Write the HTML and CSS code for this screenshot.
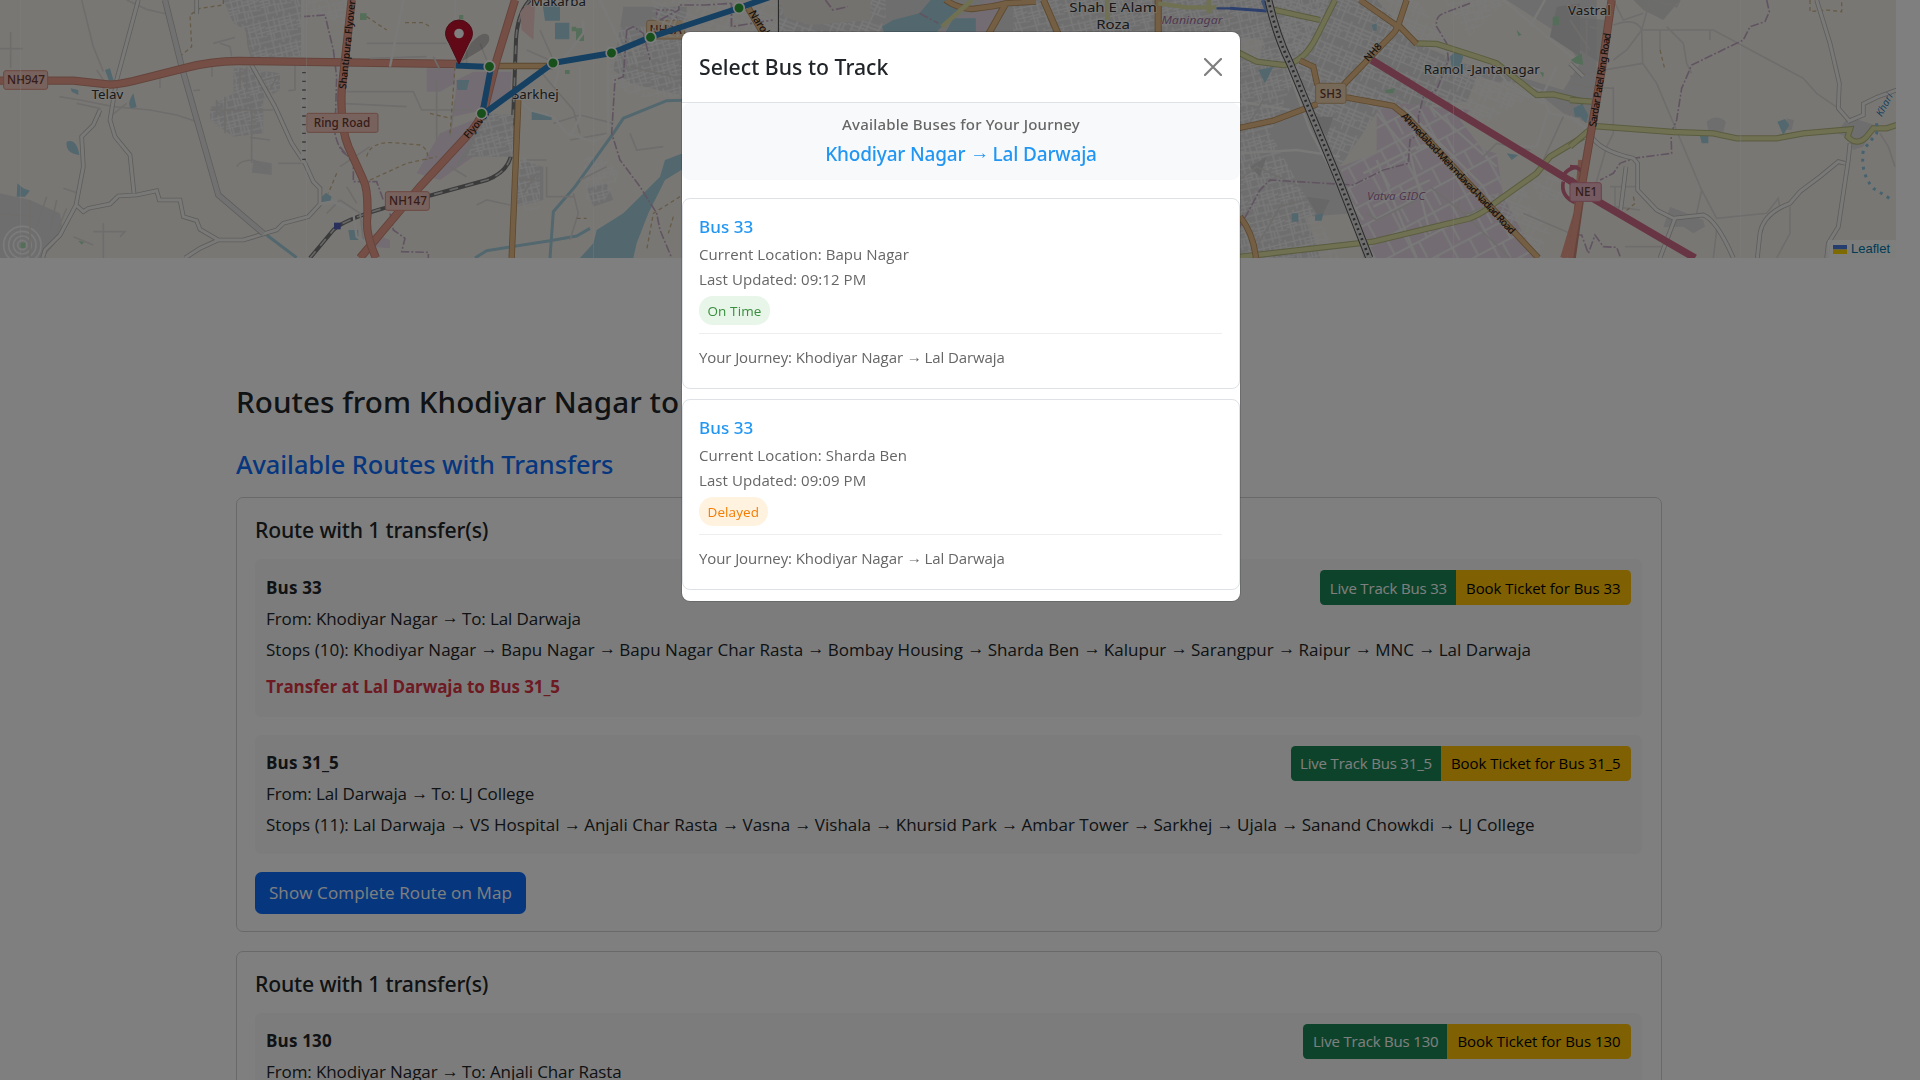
FILE: index.html
```html
<!DOCTYPE html>
<html lang="en">
<head>
<meta charset="utf-8">
<title>Bus Routes</title>
<link rel="stylesheet" href="styles.css">
</head>
<body>
<section class="map">
<svg class="map-canvas" viewBox="0 0 1896 258" width="1896" height="258">
  <defs>
    <pattern id="streets" width="94" height="82" patternUnits="userSpaceOnUse" patternTransform="rotate(-14)">
      <path d="M0 10H94M0 30H60L94 24M0 48H40L94 54M0 70H94M12 0V82M30 0V48M44 10V82M62 0V30L66 82M80 0V54M0 40H30M44 20H80M20 48V70M54 50V70M66 40H94" class="st"/>
    </pattern>
    <pattern id="streets2" width="70" height="78" patternUnits="userSpaceOnUse" patternTransform="rotate(22)">
      <path d="M0 12H70M0 34H46L70 38M0 58H70M14 0V58M34 12V78M52 0V78M0 24H14M34 24H70M14 46H52M62 38V58" class="st"/>
    </pattern>
    <pattern id="plots" width="110" height="120" patternUnits="userSpaceOnUse" patternTransform="rotate(-28)">
      <path d="M0 10H110M0 66H110M20 0V120M78 10V66M50 66V120" class="st wide"/>
    </pattern>
  </defs>
  <rect width="1896" height="258" class="land"/>

  <!-- west: Telav -->
  <g transform="scale(.33333)">
    <path class="urban" d="M670 0H905V170L760 180L735 90L700 70ZM700 200L840 220V270L790 300V400L700 410L630 360V320L700 280ZM760 480L815 490V525L755 518ZM0 580L90 600L180 640L190 700L130 774H0Z"/>
    <path fill="url(#streets)" d="M670 0H905V170L760 180L735 90L700 70ZM700 200L840 220V270L790 300V400L700 410L630 360V320L700 280ZM920 0H1050V80L930 40Z"/>
    <g class="ring"><circle cx="67" cy="735" r="14"/><circle cx="67" cy="735" r="27"/><circle cx="67" cy="735" r="41"/><circle cx="67" cy="735" r="56"/></g>
    <path class="minor" d="M245 0L280 140L310 215M380 0L440 28L500 42M32 95V205M0 146H68M178 290L240 300L340 320L450 330L530 345L590 365M740 90L745 140L760 190M660 130L690 140L695 170M640 130L705 112M480 230V265M636 190V230M885 195V270L865 272M630 330H820M755 330V490M710 500Q720 480 760 480L800 510M810 420L750 412M835 490H920M190 565L235 580M110 680L140 590M150 690L170 600M170 695L200 625M0 640L100 650M90 600V774M220 710L280 735M310 670V774M280 695H375L360 710M600 270L580 272"/>
    <path class="minor" d="M230 310L300 325V350M290 210L310 240V290M330 350L380 310M675 290V400M650 300V350M720 210V270M740 200V270M790 240L830 230L810 270M980 640L1020 600"/>
    <path class="water" d="M315 210L330 205L342 245H328ZM212 265L235 270V285L215 275ZM400 280Q380 310 392 325L410 322ZM200 425Q230 415 238 465Q195 460 200 425ZM52 550L70 565L90 572L75 590H50ZM962 595L978 578L995 590L990 608H968Z"/>
    <path class="canal" d="M800 705L890 773"/>
    <path class="green" d="M60 728h16v16H60ZM235 722l18 4-8 8ZM1080 40h20v20h-20Z"/>
    <path class="boundary" d="M905 50L975 45L1000 150L1010 230L1005 400Q1015 450 1040 465"/>
    <path class="track" d="M670 0V15L600 25L570 45L575 140L545 165M1010 520L985 580"/>
    <g class="road-c"><path d="M415 0L350 240L330 360L345 410L390 465L402 580M300 330L280 375L245 410L250 500L228 615L180 705L135 750L128 774M228 615L250 635L265 625L330 612L355 588L410 585L470 572L478 600H540L550 650L590 662L600 688L655 720H730L830 690L850 670L925 650L960 612V565L940 545L915 490L875 430L825 320L755 195M655 720L600 745L555 774M590 0V42"/></g>
    <g class="road"><path d="M415 0L350 240L330 360L345 410L390 465L402 580M300 330L280 375L245 410L250 500L228 615L180 705L135 750L128 774M228 615L250 635L265 625L330 612L355 588L410 585L470 572L478 600H540L550 650L590 662L600 688L655 720H730L830 690L850 670L925 650L960 612V565L940 545L915 490L875 430L825 320L755 195M655 720L600 745L555 774M590 0V42M908 0V490M960 612L1000 605L1050 630"/></g>
    <path class="road-c w" d="M495 0L545 200L655 585L790 700"/><path class="road w" d="M495 0L545 200L655 585L790 700"/>
    <path class="dash" d="M912 190V480"/>
    <path class="trunk-c" d="M0 242H220L330 254Q350 254 400 243L560 203Q640 182 720 183L1380 192"/>
    <path class="trunk" d="M0 242H220L330 254Q350 254 400 243L560 203Q640 182 720 183L1380 192"/>
    <path class="rail" d="M930 774L1000 690Q1030 660 1150 625L1460 540Q1530 515 1536 450L1548 120Q1552 40 1590 0"/>
    <path class="rail-d" d="M930 774L1000 690Q1030 660 1150 625L1460 540Q1530 515 1536 450L1548 120Q1552 40 1590 0"/>
    <rect x="1002" y="668" width="20" height="20" fill="#5560b8"/>
    <text x="322" y="297" class="place">Telav</text>
  </g>

  <!-- Sarkhej -->
  <g transform="translate(340 0) scale(.33333)">
    <path class="industry" d="M260 205H345L345 250L300 275H260ZM400 215H515L510 290L430 330L340 350L350 240ZM300 400L400 360V470L300 540L230 520ZM100 700L150 720V745L90 740Z"/>
    <path class="urban" d="M440 340L520 345V470L380 470L340 510ZM850 20H1040V290L870 250L820 210ZM540 480L610 500V600L530 620ZM740 560L800 550L820 600L760 620Z"/>
    <path fill="url(#streets)" d="M440 340L520 345V470L380 470ZM840 80H1040V290L880 290L800 240ZM530 460L600 500V630H530ZM730 470L790 470L840 520L790 610L740 600Z"/>
    <path class="pink" d="M540 40Q560 0 585 20L580 120L545 90Z"/>
    <path class="water" d="M608 15H660V62H615ZM645 68H688V118H645ZM350 240H388L380 270H352ZM575 335L635 345V360H575ZM25 690L55 690V720H30Z"/>
    <path class="water" d="M1040 455L975 480L960 530L900 590L850 640L770 690L760 730L720 774H880L890 730L925 640L950 590L975 540L1040 500Z"/>
    <path class="canal" d="M1050 300L980 302L850 355L820 400L705 560L640 635L630 774M405 774L440 752L630 722L710 708L750 685"/>
    <path class="green" d="M357 45h13v13h-13ZM695 80h14v14h-14ZM708 85h24v38h-24ZM675 210h14v12h-14Z"/>
    <path class="minor" d="M80 130H320M90 175L260 170M20 275H220L245 330H400M290 240V420M330 410L345 300M420 130L440 180M0 310L200 320M380 150V190M300 210L280 170M590 200L640 260L700 330L720 400M560 150L650 190M600 90L640 180M690 420L800 400M640 370L720 345L820 370M560 480H620M620 500V590H700M700 580L715 640L690 720M870 400L890 450L970 440M410 615L440 600L510 615M720 540L800 500M870 200L1040 240M830 140L860 200M540 540H600M550 580L590 520M330 500L380 530M0 600L60 640L70 720M20 560L50 610M0 500L90 440"/>
    <path class="road thin" d="M190 0L150 200M345 0V60M730 60V100L660 190L645 260M720 200V350L690 410M540 300L570 330L640 350L680 400L760 425L800 405M805 140V400M850 150L780 0M870 120L890 190M40 640L50 710L75 725"/>
    <path class="boundary" d="M860 90L850 230L825 240L815 400L840 480L900 560L950 640L960 690L995 774M0 440L40 490V545H110L130 600M150 640L160 690L195 715L185 755L265 757V774M950 90V30H1000L1020 80M860 90L880 80L910 100L930 180"/>
    <path class="track" d="M80 50L140 90M195 68H250L270 80M90 540L200 490L290 470M80 470Q90 425 160 428L240 435Q270 450 260 480M345 200L330 400M1020 590L940 640L920 750M1000 650L985 700M270 340L330 355M710 655H740"/>
    <path class="primary-c" d="M470 198H640M535 300L515 774"/><path class="primary" d="M470 198H640M535 300L515 774"/>
    <path class="trunk-c" d="M525 0L470 180L435 320Q420 370 370 420L240 560L60 774"/><path class="trunk" d="M525 0L470 180L435 320Q420 370 370 420L240 560L60 774"/>
    <path class="trunk-c" d="M35 0L5 270Q0 380 25 440L70 540Q85 570 82 650Q75 700 108 774"/><path class="trunk" d="M35 0L5 270Q0 380 25 440L70 540Q85 570 82 650Q75 700 108 774"/>
    <rect x="-100" y="340" width="214" height="57" rx="5" class="shield"/><text x="6" y="381" class="ref">Ring Road</text>
    <rect x="136" y="575" width="132" height="56" rx="7" class="shield"/><text x="204" y="614" class="ref">NH147</text>
    <rect x="920" y="61" width="114" height="56" rx="7" class="shield tan"/><text x="977" y="101" class="ref">NH8A</text>
    <text transform="translate(18 268) rotate(-84)" class="street start">Shantipura Flyover</text>
    <text transform="translate(385 418) rotate(-50)" class="street start">Flyover</text>
    <text x="655" y="18" class="place">Makarba</text>
    <text x="586" y="296" class="place">Sarkhej</text>
  </g>
  <g transform="scale(.33333)"><rect x="11" y="212" width="132" height="56" rx="7" class="shield"/><text x="78" y="253" class="ref">NH947</text></g>

  <!-- strip along the top edge -->
  <g transform="translate(660 0) scale(.376 .33333)">
    <rect x="315" y="0" width="1300" height="110" class="urban"/>
    <rect x="-20" y="0" width="620" height="110" fill="url(#streets2)"/>
    <rect x="940" y="0" width="650" height="110" fill="url(#streets)"/>
    <path class="urban soft" d="M320 0H560V60L400 75L330 50Z"/>
    <path class="industry" d="M830 40L900 20L870 110H740L790 50ZM860 0H930L910 30H850Z"/>
    <path class="water" d="M590 80L620 60L690 40L720 0H770L800 30L740 90L730 110H600ZM780 55H840V95H760Z"/>
    <path class="boundary" d="M0 60L50 30V15H120L190 10M190 10V80L300 60M440 0L460 30L500 20M690 40L740 70"/>
    <path class="primary-c" d="M760 0Q790 25 830 27Q890 20 920 10L1000 5M920 10L870 110M1020 0L1062 110M1325 0V110M235 25L280 110"/><path class="primary" d="M760 0Q790 25 830 27Q890 20 920 10L1000 5M920 10L870 110M1020 0L1062 110M1325 0V110M235 25L280 110"/>
    <path class="sec" d="M830 0L750 80M1325 10L1400 22H1480M1460 0V40M1190 0V60"/>
    <path d="M1480 25H1600" stroke="#5a7fd8" stroke-width="7"/>
    <path d="M315 0V110" stroke="#555" stroke-width="3"/>
    <text x="1205" y="35" class="place">Shah E Alam</text><text x="1205" y="86" class="place">Roza</text>
    <text x="1415" y="73" class="suburb">Maninagar</text>
    <text transform="translate(235 38) rotate(60)" class="street start">Narol-S</text>
  </g>

  <!-- Vatva -->
  <g transform="translate(1230 0) scale(.33333)">
    <path class="urban" d="M0 0H1100V380L1000 340L900 260L820 240L760 300L560 320L440 340L330 500L430 774H0Z"/>
    <path class="land" d="M440 0L600 0L830 0L1000 110L1050 190L1000 270L900 240L700 190L560 130ZM740 230L900 270L950 300L880 460L740 400L690 360ZM770 400L900 450L860 540L800 540ZM940 600L1050 620V774H900ZM230 650L370 640L400 774H270ZM0 110L100 120L90 180L30 150Z"/>
    <path fill="url(#streets)" d="M0 0H300L120 400L330 774H0ZM640 0H830L720 110Z"/>
    <path fill="url(#streets2)" d="M130 0H560L700 190L940 270L740 380L440 340L330 500L180 180Z"/>
    <path class="industry" d="M330 500L440 460V330L520 310L600 320L720 330L690 360L760 450L800 460L820 590L920 774H430Z"/>
    <path fill="url(#plots)" d="M330 500L440 460V330L520 310L600 320L720 330L690 360L760 450L800 460L820 590L920 774H430Z"/>
    <path fill="url(#streets2)" d="M760 590L880 560L960 700L920 774ZM900 530L1000 530V600L930 600Z"/>
    <path class="dark" d="M980 20L1050 10V170L960 110ZM250 350h60l-20 60ZM60 500l50-30-20 60ZM230 590l70 10-30 60Z"/>
    <path class="water" d="M85 210L130 200L105 250ZM660 170l20-20 20 20-10 30h-25ZM185 640l20 0v25h-20ZM255 645l25-5-5 22h-20ZM425 75l15-5v22h-10ZM830 460l35 5-20 15ZM1030 325L1060 310V350H1035Z"/>
    <path class="green" d="M465 270L495 265L490 280H468ZM860 90L875 105L865 108ZM968 50h20v25h-20ZM930 215l12 3-3 15Z"/>
    <path class="road thin" d="M820 0L950 110L1050 190M900 80L945 0M940 300L960 340L1050 360M980 200L935 290L955 330L920 440L870 440M700 225Q800 180 830 250L940 310M440 340L540 460L600 700M520 320L760 560M600 320L800 500M400 520L560 440M430 620L600 540M440 480L560 774M160 170L240 390L330 560L400 660M0 300L180 330M30 460L200 450L330 470M560 450Q570 430 600 440L840 680"/>
    <path class="minor" d="M600 560L700 640L840 774M690 600Q670 640 720 640L760 620M1000 350L940 480M0 560L80 500L210 560M60 774L150 620L220 600M100 300L40 400M880 640L1020 700M760 470L800 430L900 450M410 640L440 660L560 600"/>
    <path class="boundary" d="M720 10L640 40Q615 50 620 80L650 130L655 180L620 270L580 290L565 350L570 400L540 420L535 490L460 510L370 555L120 540L90 570L30 680"/>
    <path class="sec-c" d="M0 145L80 185L160 195Q220 190 260 110L315 0M110 25L270 60M560 130L620 132L740 170L800 190L920 285L970 283L1060 305M0 774L430 725L720 655Q760 640 800 605L920 520L960 470L1060 410"/>
    <path class="sec" d="M0 145L80 185L160 195Q220 190 260 110L315 0M110 25L270 60M560 130L620 132L740 170L800 190L920 285L970 283L1060 305M0 774L430 725L720 655Q760 640 800 605L920 520L960 470L1060 410"/>
    <path class="primary-c" d="M0 390L130 362L262 312M210 182L250 200L262 255M340 255L490 100Q510 80 490 70L390 0M530 0L505 75L560 132M348 292L490 318L530 350L925 774M30 650Q70 700 78 774"/>
    <path class="primary" d="M0 390L130 362L262 312M210 182L250 200L262 255M340 255L490 100Q510 80 490 70L390 0M530 0L505 75L560 132M348 292L490 318L530 350L925 774M30 650Q70 700 78 774"/>
    <path d="M0 25L110 33" stroke="#5a7fd8" stroke-width="9"/>
    <path d="M98 0L110 30" stroke="#7fa6e0" stroke-width="12"/>
    <path d="M115 0Q140 110 180 190L330 550L418 774" stroke="#555" stroke-width="24"/>
    <path d="M115 0Q140 110 180 190L330 550L418 774" stroke="#ddd" stroke-width="18"/>
    <path d="M115 0Q140 110 180 190L330 550L418 774" stroke="#555" stroke-width="8" stroke-dasharray="6 10"/>
    <path class="motor" d="M425 180L580 275L1000 530L1050 560"/>
    <path class="motor ramp" d="M1000 530Q1010 500 1060 500M1000 545Q990 590 1040 610"/>
    <path class="trunk" d="M1054 480L1040 640L1000 774"/>
    <rect x="257" y="250" width="91" height="60" rx="7" class="shield tan"/><text x="302" y="293" class="ref">SH3</text>
    <text x="755" y="222" class="place">Ramol -Jantanagar</text>
    <text x="498" y="600" class="suburb big">Vatva GIDC</text>
    <text transform="translate(512 350) rotate(47)" class="street start" textLength="485">Ahmedabad-Mehmdavad-Nadiad Road</text>
    <text transform="translate(415 187) rotate(-48)" class="street start">NH8</text>
  </g>

  <!-- east: Vastral ring road -->
  <g transform="translate(1570 0) scale(.33333)">
    <path class="dark" d="M0 50L105 60L90 190L0 130ZM190 0H330L280 60L220 30Z" opacity=".7"/>
    <path class="urban" d="M410 365Q440 340 468 365L460 395H415ZM650 355L672 360L665 390H650ZM835 350L915 375L880 440L850 450L830 410L800 400ZM300 620L400 660L405 680L370 700L340 680L280 682Z"/>
    <path class="water" d="M12 330L40 318L55 345L48 370ZM622 365L645 357L658 375L640 405ZM390 408H415V430H395Z"/>
    <path class="green" d="M2 180L35 160L40 195L15 190Z"/>
    <path class="minor" d="M215 90H430L700 235L740 280L805 325M240 0L215 90L218 190L260 250L395 570L380 640M218 190L130 205L0 230M290 80L340 130L350 190L365 220M130 75Q200 50 215 90L170 150L130 180M130 260V400M395 570L440 655L590 640L625 595L630 625M660 620V700L620 774M930 400L955 440L975 500M0 250L50 260L130 265M75 560L110 440L130 400M120 560H210M165 740H280M440 690L430 774M420 90V120M270 90V150M0 60L60 150M50 60V200M135 560V620L210 630M130 0L160 60L220 40M250 0L320 20L330 0M60 80L100 90"/>
    <path class="boundary" d="M590 0L598 35L585 65L540 80L520 120L365 195L335 265L320 360L303 400L305 460L190 475L150 490L130 520L90 540M18 705H35L55 760L75 705L100 740L140 742L152 774"/>
    <path class="track" d="M270 150L285 210M720 0V35L770 30L815 35V0M190 590L195 610L160 640"/>
    <path class="road-c" d="M740 0L780 130L808 250L805 325L840 365M833 365L880 345V312L920 292L980 270M0 190L40 230M60 400Q80 450 190 475L203 490V570L260 630L310 655L400 645Q440 660 490 774M315 655L270 774M840 430L835 480L805 680L775 730L770 774M825 490L805 485L750 530L690 575L660 610Q580 640 570 700L562 774M168 500L152 630"/>
    <path class="road" d="M740 0L780 130L808 250L805 325L840 365M833 365L880 345V312L920 292L980 270M0 190L40 230M60 400Q80 450 190 475L203 490V570L260 630L310 655L400 645Q440 660 490 774M315 655L270 774M840 430L835 480L805 680L775 730L770 774M825 490L805 485L750 530L690 575L660 610Q580 640 570 700L562 774M168 500L152 630M0 350L60 395"/>
    <path class="sec-c" d="M0 300L65 305M0 440L70 380M70 378L310 396L430 400L500 415H620L700 400L840 388L833 410Q860 440 890 410L910 385H950L980 375"/>
    <path class="sec" d="M0 300L65 305M0 440L70 380M70 378L310 396L430 400L500 415H620L700 400L840 388L833 410Q860 440 890 410L910 385H950L980 375"/>
    <path class="dots" d="M920 370V400L880 450Q870 520 910 565L970 602"/>
    <path class="motor" d="M0 540L60 590L290 725L375 774"/><path class="motor ramp" d="M0 500Q30 500 38 520"/>
    <path class="trunk-c" d="M125 0L95 210L35 560L5 774"/><path class="trunk" d="M125 0L95 210L35 560L0 774"/>
    <rect x="0" y="548" width="94" height="56" rx="7" class="shield rose"/><text x="48" y="589" class="ref">NE1</text>
    <text x="58" y="45" class="place">Vastral</text>
    <text transform="translate(78 382) rotate(-81)" class="street start" textLength="285">Sardar Patel Ring Road</text>
    <text transform="translate(935 352) rotate(-62)" class="river">Khari</text>
  </g>
  <path d="M20.500 0V258M306.500 0V258M593.500 0V258M1453.500 0V258M1740.500 0V258" stroke="#fff" stroke-opacity=".35"/>

  <!-- tracked route -->
  <path class="route" d="M456 65.500L491 67L482 115L553 63L612 53L651 37L739 8L770-3"/>
  <g class="stop"><circle cx="489.500" cy="66.500" r="5.300"/><circle cx="481.500" cy="113.500" r="5.300"/><circle cx="553" cy="63" r="5.300"/><circle cx="611.500" cy="53" r="5.300"/><circle cx="650.500" cy="37.300" r="5.300"/><circle cx="739" cy="8" r="5.300"/></g>
  <path d="M461 62L471 43Q484 29 489 36Q491 43 481 50Z" class="pin-shadow"/>
  <path d="M459 64L449 43Q445.500 38 445.500 33.500A13.500 13.500 0 0 1 472.500 33.500Q472.500 38 469 43Z" class="pin"/>
  <circle cx="459" cy="33.500" r="4.800" fill="#fff"/>
</svg>
<div class="attribution">
  <svg width="14" height="9" viewBox="0 0 14 9"><path fill="#4c7be1" d="M0 0h14v4.500H0z"/><path fill="#ffd500" d="M0 4.500h14V9H0z"/></svg>
  <span>Leaflet</span>
</div>
</section>

<main class="container">
  <h2 class="page-title">Routes from Khodiyar Nagar to</h2>
  <h3 class="section-title">Available Routes with Transfers</h3>

  <article class="card">
    <h4 class="card-title">Route with 1 transfer(s)</h4>
    <section class="leg">
      <div class="leg-head"><strong>Bus 33</strong>
        <div class="actions"><button class="track-btn">Live Track Bus 33</button><button class="book-btn">Book Ticket for Bus 33</button></div></div>
      <p class="from">From: Khodiyar Nagar <i>→</i> To: Lal Darwaja</p>
      <p class="stops">Stops (10): Khodiyar Nagar <i>→</i> Bapu Nagar <i>→</i> Bapu Nagar Char Rasta <i>→</i> Bombay Housing <i>→</i> Sharda Ben <i>→</i> Kalupur <i>→</i> Sarangpur <i>→</i> Raipur <i>→</i> MNC <i>→</i> Lal Darwaja</p>
      <p class="transfer">Transfer at Lal Darwaja to Bus 31_5</p>
    </section>
    <section class="leg">
      <div class="leg-head"><strong>Bus 31_5</strong>
        <div class="actions"><button class="track-btn">Live Track Bus 31_5</button><button class="book-btn">Book Ticket for Bus 31_5</button></div></div>
      <p class="from">From: Lal Darwaja <i>→</i> To: LJ College</p>
      <p class="stops">Stops (11): Lal Darwaja <i>→</i> VS Hospital <i>→</i> Anjali Char Rasta <i>→</i> Vasna <i>→</i> Vishala <i>→</i> Khursid Park <i>→</i> Ambar Tower <i>→</i> Sarkhej <i>→</i> Ujala <i>→</i> Sanand Chowkdi <i>→</i> LJ College</p>
    </section>
    <button class="show-btn">Show Complete Route on Map</button>
  </article>

  <article class="card">
    <h4 class="card-title">Route with 1 transfer(s)</h4>
    <section class="leg">
      <div class="leg-head"><strong>Bus 130</strong>
        <div class="actions"><button class="track-btn">Live Track Bus 130</button><button class="book-btn">Book Ticket for Bus 130</button></div></div>
      <p class="from">From: Khodiyar Nagar <i>→</i> To: Anjali Char Rasta</p>
    </section>
  </article>
</main>

<div class="backdrop">
  <div class="modal">
    <header class="modal-head">
      <h5>Select Bus to Track</h5>
      <svg width="18" height="18" viewBox="0 0 18 18"><path d="M1 1L17 17M17 1L1 17" stroke="#7f7f7f" stroke-width="2.200" stroke-linecap="round"/></svg>
    </header>
    <div class="journey">
      <p class="journey-label">Available Buses for Your Journey</p>
      <p class="journey-route">Khodiyar Nagar <i>→</i> Lal Darwaja</p>
    </div>
    <div class="bus">
      <h6>Bus 33</h6>
      <p>Current Location: Bapu Nagar</p>
      <p>Last Updated: 09:12 PM</p>
      <span class="badge on-time">On Time</span>
      <p class="trip">Your Journey: Khodiyar Nagar <i>→</i> Lal Darwaja</p>
    </div>
    <div class="bus">
      <h6>Bus 33</h6>
      <p>Current Location: Sharda Ben</p>
      <p>Last Updated: 09:09 PM</p>
      <span class="badge delayed">Delayed</span>
      <p class="trip">Your Journey: Khodiyar Nagar <i>→</i> Lal Darwaja</p>
    </div>
  </div>
</div>
</body>
</html>
```
FILE: styles.css
```css
* { box-sizing: border-box; margin: 0; padding: 0; }
html { height: 1080px; overflow: hidden; }
body {
  height: 1080px;
  overflow: hidden;
  background: #fff;
  color: #212529;
  font: 400 17px/26px "Open Sans", "Noto Sans", sans-serif;
}
h2, h3, h4, h5, h6 { font-family: "Noto Sans", "Open Sans", sans-serif; font-weight: 500; }
button { font: inherit; border: 0; }
i {
  display: inline-block;
  width: .93em;
  font: 1em/1 "Liberation Sans", sans-serif;
  text-align: center;
  vertical-align: .07em;
  letter-spacing: 0;
}

/* map */
.map { position: relative; width: 1896px; height: 258px; overflow: hidden; }
.map-canvas { display: block; }
.map-canvas path { fill: none; }
.map-canvas path[fill] { fill: revert-layer; }
.map-canvas .land { fill: #f2efe9; }
.map-canvas .urban { fill: #dedddd; }
.map-canvas .urban.soft { fill: #e9e4de; }
.map-canvas .dark { fill: #cfcfcf; }
.map-canvas .industry { fill: #e6d9e4; }
.map-canvas .pink { fill: #f0cfca; }
.map-canvas .water { fill: #a5cfdc; }
.map-canvas .green { fill: #a9dcb4; }
.map-canvas .pin { fill: #c2132f; stroke: #98182a; }
.map-canvas .pin-shadow { fill: rgba(0, 0, 0, .2); }
.canal { stroke: #a5cfdc; stroke-width: 9; }
.dots { stroke: #8cc4dc; stroke-width: 9; stroke-dasharray: 9 15; }
.st { stroke: #f3f3f3; stroke-width: 4; }
.st.wide { stroke-width: 6; }
.ring { fill: none; stroke: #f6f6f6; stroke-width: 5; }
.minor { stroke: #dcdad8; stroke-width: 5; }
.road-c { stroke: #bdbbb8; stroke-width: 14; fill: none; }
.road { stroke: #f3f2f1; stroke-width: 9; fill: none; }
.road-c.w { stroke-width: 19; }
.road.w { stroke-width: 14; stroke: #e3e3e3; }
.road.thin { stroke-width: 7; }
.dash { stroke: #777; stroke-width: 11; stroke-dasharray: 4 22; }
.trunk-c { stroke: #c98878; stroke-width: 25; }
.trunk { stroke: #ea9f8b; stroke-width: 19; }
.primary-c { stroke: #b8925f; stroke-width: 19; }
.primary { stroke: #e8bd88; stroke-width: 14; }
.sec-c { stroke: #b5b880; stroke-width: 19; }
.sec { stroke: #dfe2a4; stroke-width: 13; }
.motor { stroke: #cf6a86; stroke-width: 22; }
.motor.ramp { stroke-width: 11; }
.rail { stroke: #777; stroke-width: 12; }
.rail-d { stroke: #ccc; stroke-width: 5; stroke-dasharray: 26 22; }
.boundary { stroke: #c3a9c3; stroke-width: 5; stroke-dasharray: 26 6 6 6; }
.track { stroke: #cdb78e; stroke-width: 4; stroke-dasharray: 12 9; }
.shield { fill: #f0c4ba; stroke: #d98f80; stroke-width: 3; }
.shield.tan { fill: #ecd3b0; stroke: #caa878; }
.shield.rose { fill: #eab4c2; stroke: #d98095; }
.map-canvas text {
  font-family: "Noto Sans", sans-serif;
  text-anchor: middle;
  paint-order: stroke;
  stroke: rgba(255, 255, 255, .6);
  stroke-width: 6px;
  stroke-linejoin: round;
}
.map-canvas .place { font-size: 40px; fill: #333; }
.map-canvas .ref { font-size: 35px; font-weight: 500; fill: #6b3b34; stroke: none; }
.map-canvas .street { font-size: 30px; fill: #2f2420; stroke: none; font-weight: 500; }
.map-canvas .suburb { font-size: 33px; font-style: italic; fill: #9d6f9d; stroke-width: 3px; }
.map-canvas .suburb.big { font-size: 35px; }
.map-canvas .river { font-size: 31px; font-style: italic; fill: #3b7fb3; stroke-width: 3px; }
.map-canvas .start, .map-canvas .river { text-anchor: start; }
.route { stroke: #2c80c4; stroke-width: 6; stroke-linejoin: round; }
.stop { fill: #2fa036; stroke: #fff; stroke-width: 1.7; }
.attribution {
  position: absolute;
  right: 0;
  bottom: 0;
  display: flex;
  align-items: center;
  gap: 4px;
  width: 68px;
  height: 18px;
  padding-left: 5px;
  background: rgba(255, 255, 255, .8);
  color: #0078a8;
  font: 13px/18px "Liberation Sans", sans-serif;
}

/* route list */
.container { width: 1425.5px; margin-left: 236px; padding-top: 125px; }
.page-title { height: 37px; margin-bottom: 28px; font-size: 29.6px; line-height: 37px; letter-spacing: .0022em; }
.section-title { height: 32px; margin-bottom: 17px; color: #0d6efd; font-size: 25.4px; line-height: 32px; letter-spacing: -.0028em; }
.card { margin-bottom: 18.5px; padding: 19px 18.5px 17.6px 18px; border: 1px solid #d2d3d4; border-radius: 7px; }
.card-title { height: 26px; margin-bottom: 16px; font-size: 21.2px; line-height: 26px; letter-spacing: -.008em; }
.leg { margin-bottom: 17.8px; padding: 11px 11.5px 15.5px 11px; border-radius: 6px; background: #f8f9fa; }
.leg-head { display: flex; align-items: center; justify-content: space-between; height: 35px; letter-spacing: .01em; }
.actions { display: flex; height: 100%; font-size: 15px; }
.track-btn { padding: 0 9px 0 9.5px; border-radius: 4.4px 0 0 4.4px; background: #198754; color: #fff; letter-spacing: -.012em; }
.book-btn { padding: 0 10px; border-radius: 0 4.4px 4.4px 0; background: #ffc107; color: #000; letter-spacing: -.003em; }
.from { margin: .6px 0 5px; letter-spacing: -.006em; }
.stops { white-space: nowrap; letter-spacing: .001em; }
.transfer { margin: 11px 0 2px; color: #dc3545; font-weight: 700; letter-spacing: -.005em; }
.show-btn { display: block; height: 42px; width: 271px; border-radius: 6.6px; background: #0d6efd; color: #fff; letter-spacing: .0075em; }

/* dialog */
.backdrop { position: fixed; inset: 0; padding: 32px 0 0 2px; background: rgba(0, 0, 0, .5); }
.modal { width: 558px; height: 569px; margin: 0 auto; border-radius: 8px; background: #fff; box-shadow: 0 0 0 1px rgba(0, 0, 0, .15); }
.modal-head { display: flex; align-items: center; justify-content: space-between; height: 71px; padding: 0 18px 0 17px; border-bottom: 1px solid #dee2e6; }
.modal-head h5 { font-size: 21.2px; letter-spacing: .001em; }
.journey { height: 77px; margin-bottom: 18px; padding-top: 9px; border-radius: 8px; background: #f8f9fa; text-align: center; font-family: "Noto Sans", "Open Sans", sans-serif; font-weight: 500; }
.journey-label { height: 24px; margin-bottom: 4.6px; color: #666; font-size: 15px; line-height: 24px; letter-spacing: .013em; }
.journey-route { color: #2196f3; font-size: 19px; letter-spacing: -.009em; }
.bus { height: 190.5px; margin-bottom: 10.5px; padding: 16.3px 17.5px 0 16px; border: 1px solid #dee2e6; border-radius: 8px; color: #666; font-size: 15px; line-height: 25px; }
.bus h6 { height: 27px; color: #2196f3; font-size: 17px; line-height: 24px; letter-spacing: .004em; }
.bus p { letter-spacing: .005em; }
.bus .trip { margin-top: 8.7px; padding-top: 10.8px; border-top: 1px solid #eee; letter-spacing: -.006em; }
.badge { display: block; width: fit-content; height: 29px; margin-top: 3.5px; padding: 0 8.5px; border-radius: 14px; font-size: 13.5px; line-height: 30px; letter-spacing: .008em; }
.on-time { background: #e8f5e9; color: #388e3c; }
.delayed { background: #fff3e0; color: #f57c00; }
```
